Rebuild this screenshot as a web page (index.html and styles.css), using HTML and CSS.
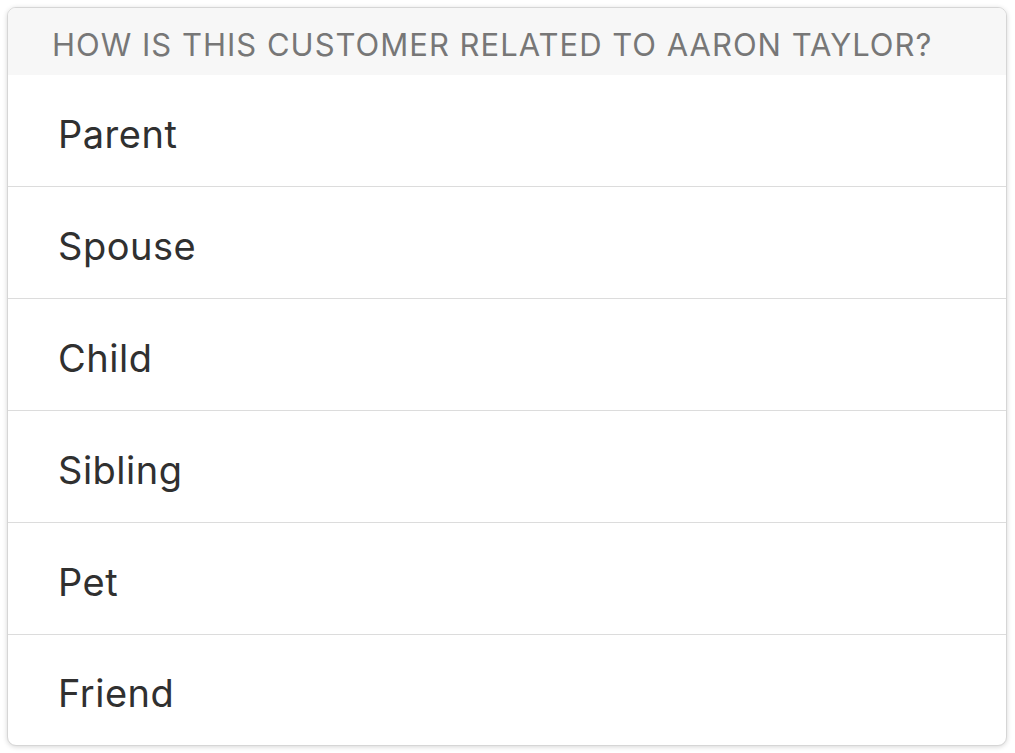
FILE: index.html
```html
<!DOCTYPE html>
<html lang="en">
<head>
    <meta charset="UTF-8">
    <meta name="viewport" content="width=device-width, initial-scale=1.0">
    <title>Relationship picker</title>
    <link rel="stylesheet" href="styles.css">
</head>
<body>
    <div class="picker">
        <div class="picker-title">HOW IS THIS CUSTOMER RELATED TO AARON TAYLOR?</div>
        <div class="picker-list">
            <div class="picker-item">Parent</div>
            <div class="picker-item">Spouse</div>
            <div class="picker-item">Child</div>
            <div class="picker-item">Sibling</div>
            <div class="picker-item">Pet</div>
            <div class="picker-item">Friend</div>
        </div>
    </div>
</body>
</html>
```

FILE: styles.css
```css
* {
    margin: 0;
    padding: 0;
    box-sizing: border-box;
    font-family: Inter, Roboto, "Liberation Sans", sans-serif;
}

body {
    background-color: #ffffff;
    padding: 7px 8px 7px 7px;
    height: 100vh;
}

.picker {
    width: 1000px;
    height: 739px;
    background-color: white;
    border-radius: 9px;
    border: 1px solid #d6d6d6;
    box-shadow: 0 1px 5px rgba(0,0,0,0.16);
    overflow: hidden;
    display: flex;
    flex-direction: column;
}

.picker-title {
    height: 67px;
    background-color: #f7f7f7;
    color: #777;
    font-size: 31px;
    padding: 5px 0 0 44px;
    display: flex;
    align-items: center;
    letter-spacing: 1px;
}

.picker-list {
    display: flex;
    flex-direction: column;
    flex: 1;
}

.picker-item {
    height: 112px;
    display: flex;
    align-items: center;
    padding: 6px 0 0 50px;
    font-size: 38px;
    letter-spacing: 0.5px;
    color: #303030;
    border-bottom: 1px solid #dcdcdc;
}

.picker-item:last-child {
    border-bottom: none;
    flex: 1;
}
```
